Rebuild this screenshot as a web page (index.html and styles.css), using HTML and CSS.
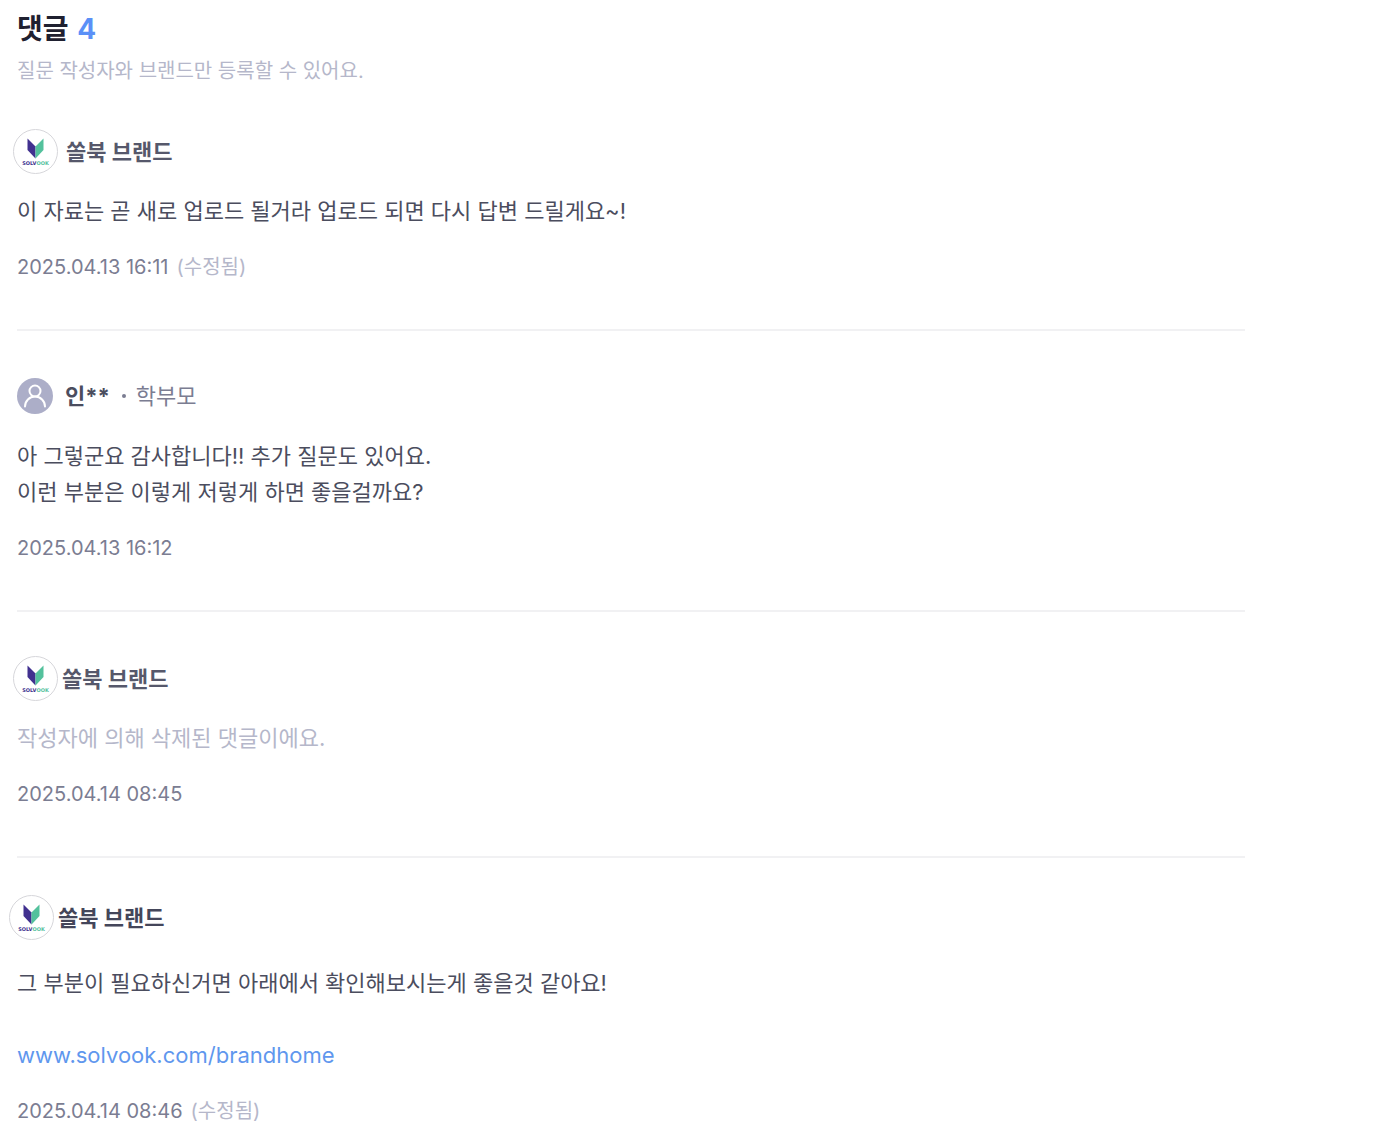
FILE: index.html
```html
<!DOCTYPE html>
<html lang="ko">
<head>
<meta charset="utf-8">
<meta name="viewport" content="width=device-width, initial-scale=1">
<title>댓글</title>
<link rel="stylesheet" href="styles.css">
</head>
<body>
<main class="comments">
  <header class="comments-head">
    <h1 class="title">댓글 <span class="count">4</span></h1>
    <p class="notice">질문 작성자와 브랜드만 등록할 수 있어요.</p>
  </header>

  <article class="comment">
    <div class="author brand">
      <svg class="logo" viewBox="0 0 90 90">
        <circle cx="45" cy="45" r="44" fill="#fff" stroke="#d6d6da" stroke-width="2"/>
        <path d="M29 19 45 35V59L29 42Z" fill="#41308f"/>
        <path d="M61 19 45 35V59L61 42Z" fill="#53c19c"/>
        <text class="logo-text" x="45" y="71" text-anchor="middle"><tspan fill="#41308f">SOLV</tspan><tspan fill="#53c19c">OOK</tspan></text>
      </svg>
      <strong class="name">쏠북 브랜드</strong>
    </div>
    <p class="body">이 자료는 곧 새로 업로드 될거라 업로드 되면 다시 답변 드릴게요~!</p>
    <p class="meta"><time datetime="2025-04-13T16:11">2025.04.13 16:11</time><span class="edited">(수정됨)</span></p>
  </article>

  <article class="comment">
    <div class="author user">
      <svg class="avatar" viewBox="0 0 36 36" aria-hidden="true">
        <circle cx="18" cy="18" r="18" fill="#acaec8"/>
        <g fill="none" stroke="#fff" stroke-width="2" stroke-linecap="round"><circle cx="18" cy="13" r="5.500"/><path d="M8 28.500A10 10 0 0 1 28 28.500"/></g>
      </svg>
      <strong class="name">인**</strong><span class="dot"></span><span class="role">학부모</span>
    </div>
    <p class="body">아 그렇군요 감사합니다!! 추가 질문도 있어요.
이런 부분은 이렇게 저렇게 하면 좋을걸까요?</p>
    <p class="meta"><time datetime="2025-04-13T16:12">2025.04.13 16:12</time></p>
  </article>

  <article class="comment">
    <div class="author brand snug">
      <svg class="logo" viewBox="0 0 90 90">
        <circle cx="45" cy="45" r="44" fill="#fff" stroke="#d6d6da" stroke-width="2"/>
        <path d="M29 19 45 35V59L29 42Z" fill="#41308f"/>
        <path d="M61 19 45 35V59L61 42Z" fill="#53c19c"/>
        <text class="logo-text" x="45" y="71" text-anchor="middle"><tspan fill="#41308f">SOLV</tspan><tspan fill="#53c19c">OOK</tspan></text>
      </svg>
      <strong class="name">쏠북 브랜드</strong>
    </div>
    <p class="body deleted">작성자에 의해 삭제된 댓글이에요.</p>
    <p class="meta"><time datetime="2025-04-14T08:45">2025.04.14 08:45</time></p>
  </article>

  <article class="comment latest">
    <div class="author brand snug">
      <svg class="logo" viewBox="0 0 90 90">
        <circle cx="45" cy="45" r="44" fill="#fff" stroke="#d6d6da" stroke-width="2"/>
        <path d="M29 19 45 35V59L29 42Z" fill="#41308f"/>
        <path d="M61 19 45 35V59L61 42Z" fill="#53c19c"/>
        <text class="logo-text" x="45" y="71" text-anchor="middle"><tspan fill="#41308f">SOLV</tspan><tspan fill="#53c19c">OOK</tspan></text>
      </svg>
      <strong class="name">쏠북 브랜드</strong>
    </div>
    <p class="body">그 부분이 필요하신거면 아래에서 확인해보시는게 좋을것 같아요!

<a class="link" href="https://www.solvook.com/brandhome">www.solvook.com/brandhome</a></p>
    <p class="meta"><time datetime="2025-04-14T08:46">2025.04.14 08:46</time><span class="edited">(수정됨)</span></p>
  </article>
</main>
</body>
</html>
```
FILE: styles.css
```css
* { box-sizing: border-box; }
body {
  margin: 0;
  background: #fff;
  color: #4b4d5e;
  font-family: Inter, "Noto Sans CJK KR", sans-serif;
}
h1, p { margin: 0; }

.comments { padding: 9px 136px 0 17px; }
.title { font-size: 28px; line-height: 40px; font-weight: 700; color: #1f2030; }
.count { margin-left: 2px; color: #5b90f7; }
.notice { margin-top: 8px; font-size: 20px; line-height: 28px; color: #b5b7ca; }

.comment { padding: 44px 0 48px; border-bottom: 2px solid #f1f1f3; }
.comment:last-child { padding-bottom: 0; border-bottom: 0; }
.author { display: flex; align-items: center; font-size: 22px; line-height: 36px; }
.name { font-weight: 700; }
.brand { gap: 8px; margin: 0 0 19px -4px; }
.brand .name { color: #56586b; }
.snug { gap: 4px; }
.user { margin: 3px 0 24px; }
.user .name { margin-left: 12px; }
.logo { width: 45px; height: 45px; flex: none; }
.logo-text { font: 700 10px "DejaVu Sans", sans-serif; }
.avatar { width: 36px; height: 36px; flex: none; }
.dot { width: 4px; height: 4px; margin: 0 10px 0 12px; border-radius: 50%; background: #7b7d92; }
.role { color: #7b7d92; }

.body { font-size: 22px; line-height: 36px; white-space: pre-line; }
.deleted { color: #b5b7ca; }
.link { color: #5f97ee; text-decoration: none; }
.meta { display: flex; gap: 8px; margin-top: 24px; font-size: 20px; line-height: 28px; color: #7b7d92; }
.edited { color: #b5b7ca; }

.latest { padding-top: 37px; }
.latest .brand { margin: 0 0 25px -8px; }
.latest .name { color: #44465a; }
```
